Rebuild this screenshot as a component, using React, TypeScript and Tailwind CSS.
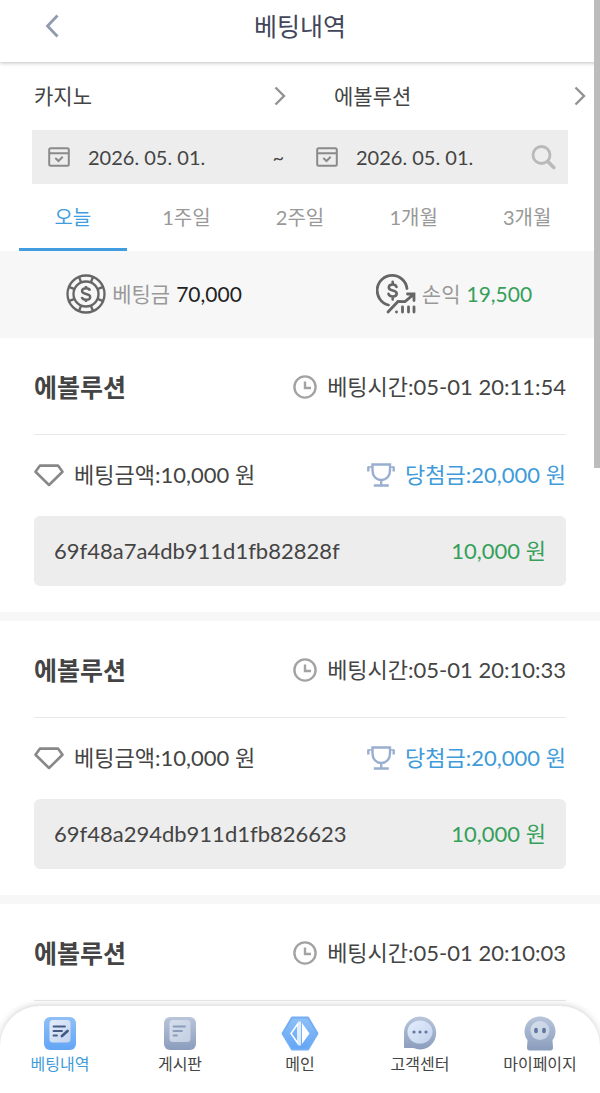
import { useState, type ReactNode } from "react";

const games = ["카지노", "슬롯"];
const vendors = ["에볼루션", "프라그마틱"];
const periods = ["오늘", "1주일", "2주일", "1개월", "3개월"];

type Bet = {
  vendor: string;
  time: string;
  detail?: { stake: string; win: string; id: string; profit: string };
};

const bets: Bet[] = [
  {
    vendor: "에볼루션",
    time: "05-01 20:11:54",
    detail: {
      stake: "10,000",
      win: "20,000",
      id: "69f48a7a4db911d1fb82828f",
      profit: "10,000",
    },
  },
  {
    vendor: "에볼루션",
    time: "05-01 20:10:33",
    detail: {
      stake: "10,000",
      win: "20,000",
      id: "69f48a294db911d1fb826623",
      profit: "10,000",
    },
  },
  { vendor: "에볼루션", time: "05-01 20:10:03" },
];

function ChevronIcon() {
  return (
    <svg
      viewBox="0 0 12 20"
      className="h-5 w-3 shrink-0 fill-none stroke-[#929292]"
      strokeWidth="2.4"
      aria-hidden="true"
    >
      <path d="M1.5 1.5 10 10l-8.5 8.5" />
    </svg>
  );
}

function CalendarIcon() {
  return (
    <svg
      viewBox="0 0 22 20"
      className="h-5 w-[22px] shrink-0 fill-none stroke-[#8a8a8a]"
      strokeWidth="2"
      aria-hidden="true"
    >
      <rect x="1.2" y="1.2" width="19.6" height="17.6" rx="1.5" />
      <path d="M1 6.3h20M7.3 11l3.2 3 4.2-4.2" />
    </svg>
  );
}

function SearchIcon() {
  return (
    <svg
      viewBox="0 0 26 26"
      className="size-[26px] fill-none stroke-[#b9b9b9]"
      aria-hidden="true"
    >
      <circle cx="11.5" cy="11" r="8.5" strokeWidth="2.8" />
      <path d="m17.8 17.5 6 6" strokeWidth="3.6" strokeLinecap="round" />
    </svg>
  );
}

const chipAngles = [22.5, 67.5, 112.5, 157.5, 202.5, 247.5, 292.5, 337.5];

function ChipIcon() {
  return (
    <svg
      viewBox="0 0 40 40"
      className="size-10 shrink-0 fill-none stroke-[#666]"
      strokeWidth="2.3"
      aria-hidden="true"
    >
      <circle cx="20" cy="20" r="18.5" />
      <circle cx="20" cy="20" r="12.5" />
      {chipAngles.map((angle) => (
        <path
          key={angle}
          d="M20 1.5v6"
          strokeWidth="2.4"
          transform={`rotate(${angle} 20 20)`}
        />
      ))}
      <path
        d="M24 16.6c-.4-1.5-1.9-2.4-4-2.4-2.4 0-4 1.1-4 2.9 0 4.2 8.2 1.7 8.2 5.8 0 1.8-1.7 2.9-4.2 2.9-2.3 0-3.9-1-4.3-2.7M20 12v2.2M20 25.8V28"
        strokeWidth="2.4"
      />
    </svg>
  );
}

function ProfitIcon() {
  return (
    <svg
      viewBox="0 0 40 40"
      className="size-10 shrink-0 fill-none stroke-[#666]"
      strokeWidth="2.8"
      strokeLinecap="round"
      aria-hidden="true"
    >
      <path d="M12.5 31A15 15 0 1 1 31 14.5" />
      <path
        d="M20.5 13c-.4-1.6-1.9-2.5-3.8-2.5-2.3 0-3.9 1.2-3.9 3 0 4.2 7.9 2 7.9 6.1 0 1.9-1.7 3-4 3-2.2 0-3.8-1-4.2-2.8M16.7 7.7v2.8M16.7 22.6v2.8"
        strokeWidth="2.6"
      />
      <path d="M12 38l10-10.5 7 .2 9-7.5M31.5 20H38v6.5" />
      <path d="M20.5 37.8v.2M26.5 33v5M32.500 33v5M38 33v5" />
    </svg>
  );
}

function ClockIcon() {
  return (
    <svg
      viewBox="0 0 24 24"
      className="size-6 shrink-0 fill-none stroke-[#a3a3a3]"
      strokeWidth="2.4"
      aria-hidden="true"
    >
      <circle cx="12" cy="12" r="10.6" />
      <path d="M12 6.5V13h6" />
    </svg>
  );
}

function DiamondIcon() {
  return (
    <svg
      viewBox="0 0 30 23"
      className="h-[23px] w-[30px] shrink-0 fill-none stroke-[#888]"
      strokeWidth="2.6"
      aria-hidden="true"
    >
      <path d="M6 1.6h18l4.5 6.2L15 21 1.5 7.8z" strokeLinejoin="round" />
    </svg>
  );
}

function TrophyIcon() {
  return (
    <svg
      viewBox="0 0 28 24"
      className="h-6 w-7 shrink-0 fill-none stroke-[#9aafd0]"
      strokeWidth="2.4"
      aria-hidden="true"
    >
      <path d="M5.5 1.5h17.5v6c0 5.500-3.500 9.500-8.750 9.500S5.500 13 5.500 7.500zM14.200 17v5M6.800 22.500h15M1.300 3.500v5M26.700 3.500v5" />
      <path d="M5 4H1M23 4h4" strokeWidth="1.6" />
    </svg>
  );
}

function Gradients() {
  return (
    <svg className="absolute size-0" aria-hidden="true">
      <defs>
        <linearGradient id="navBlue" x1="0" y1="0" x2="0" y2="1">
          <stop offset="0" stopColor="#8fc0f7" />
          <stop offset="1" stopColor="#62a5f5" />
        </linearGradient>
        <linearGradient id="navGray" x1="0" y1="0" x2="0" y2="1">
          <stop offset="0" stopColor="#b8c5da" />
          <stop offset="1" stopColor="#8b9dbd" />
        </linearGradient>
        <linearGradient id="navFace" x1="0" y1="0" x2="1" y2="1">
          <stop offset="0" stopColor="#e3edfb" />
          <stop offset="1" stopColor="#c3d3ee" />
        </linearGradient>
        <linearGradient id="navFaceGray" x1="0" y1="0" x2="1" y2="1">
          <stop offset="0" stopColor="#d5deeb" />
          <stop offset="1" stopColor="#c3cfe2" />
        </linearGradient>
      </defs>
    </svg>
  );
}

const navItems: { label: string; active?: boolean; icon: ReactNode }[] = [
  {
    label: "베팅내역",
    active: true,
    icon: (
      <>
        <rect x="3" y="1" width="32" height="33" rx="6" fill="url(#navBlue)" />
        <rect x="8.5" y="4" width="21" height="22.5" rx="3.5" fill="url(#navFace)" />
        <path
          d="M12.5 10.5h11.5M12.5 15h8.5M12.5 19.5h3.5"
          stroke="#465a86"
          strokeWidth="1.8"
          strokeLinecap="round"
        />
        <path d="m21 20 5.5-5" stroke="#465a86" strokeWidth="2.8" strokeLinecap="round" />
      </>
    ),
  },
  {
    label: "게시판",
    icon: (
      <>
        <rect x="3" y="1" width="32" height="33" rx="6" fill="url(#navGray)" />
        <rect x="8.5" y="4" width="21" height="22" rx="3.5" fill="url(#navFaceGray)" />
        <path
          d="M12.5 10.5h11.5M12.5 15h8.5M12.5 19.5h3.5"
          stroke="#8b9cbc"
          strokeWidth="1.8"
          strokeLinecap="round"
        />
      </>
    ),
  },
  {
    label: "메인",
    icon: (
      <>
        <path
          d="M11 1.5h16l9.5 16-9.5 16H11l-9.5-16z"
          fill="url(#navBlue)"
          stroke="#74aef5"
          strokeWidth="2"
          strokeLinejoin="round"
        />
        <path d="M17 7.5 10 17.500l7 10z" fill="none" stroke="#fff" strokeWidth="1.5" />
        <path d="M19 5.5v24" stroke="#fff" strokeWidth="1.5" />
        <path d="m21 7 7.5 10.5L21 28z" fill="#fff" />
      </>
    ),
  },
  {
    label: "고객센터",
    icon: (
      <>
        <path
          d="M19 .5a16 16.5 0 1 1-6.5 31.5H4c-.7 0-1-.4-1-1V17A16 16.5 0 0 1 19 .5z"
          fill="url(#navGray)"
        />
        <ellipse cx="19" cy="16" rx="12.5" ry="11.5" fill="url(#navFace)" />
        <path
          d="M13 16h.01M19 16h.01M25 16h.01"
          stroke="#6479a2"
          strokeWidth="3.2"
          strokeLinecap="round"
        />
      </>
    ),
  },
  {
    label: "마이페이지",
    icon: (
      <>
        <path
          d="M19 .5C28 .5 34.5 7 34.5 15.5c0 4-1.300 6.500-3 8.500l.5 7.500c.1 2-1 3-2.500 3h-21c-1.500 0-2.600-1-2.500-3L6.500 24c-1.700-2-3-4.500-3-8.500C3.500 7 10 .5 19 .5z"
          fill="url(#navGray)"
        />
        <circle cx="19" cy="14.5" r="9.5" fill="url(#navFaceGray)" />
        <path
          d="M15 13.5v2M23 13.5v2"
          stroke="#5f749e"
          strokeWidth="3.6"
          strokeLinecap="round"
        />
      </>
    ),
  },
];

function FilterSelect({ label, options }: { label: string; options: string[] }) {
  return (
    <label className="flex items-center pr-[14px] pl-[34px]">
      <select
        aria-label={label}
        className="h-9 min-w-0 flex-1 appearance-none bg-transparent text-[21px] leading-9 outline-none"
      >
        {options.map((option) => (
          <option key={option}>{option}</option>
        ))}
      </select>
      <ChevronIcon />
    </label>
  );
}

function DateField({ label, children }: { label: string; children: ReactNode }) {
  return (
    <div className="flex items-center pr-3 pl-4">
      <label className="flex min-w-0 flex-1 items-center gap-[18px]">
        <CalendarIcon />
        <input
          type="text"
          aria-label={label}
          defaultValue="2026. 05. 01."
          className="w-full min-w-0 bg-transparent text-xl leading-7 outline-none"
        />
      </label>
      {children}
    </div>
  );
}

function BetCard({ bet }: { bet: Bet }) {
  return (
    <article className="border-b-[9px] border-[#f7f7f7] px-[34px] last:border-b-0">
      <div className="flex items-center justify-between border-b border-[#e8e8e8] pt-[34px] pb-8 leading-[30px]">
        <h2 className="text-[25px] font-bold">{bet.vendor}</h2>
        <p className="flex items-center gap-2.5 text-[22px]">
          <ClockIcon />
          베팅시간:{bet.time}
        </p>
      </div>
      {bet.detail && (
        <div className="pb-[26px]">
          <div className="flex items-center justify-between pt-[25px] pb-[26px] text-[22px] leading-[30px]">
            <p className="flex items-center gap-2.5">
              <DiamondIcon />
              베팅금액:{bet.detail.stake} 원
            </p>
            <p className="flex items-center gap-2.5 text-[#3f9bd9]">
              <TrophyIcon />
              당첨금:{bet.detail.win} 원
            </p>
          </div>
          <div className="flex items-center justify-between rounded-md bg-[#ededed] px-5 py-5 text-[22px] leading-[30px]">
            <span className="[font-variant-ligatures:none]">{bet.detail.id}</span>
            <span className="text-[#35a05a]">{bet.detail.profit} 원</span>
          </div>
        </div>
      )}
    </article>
  );
}

export default function App() {
  const [period, setPeriod] = useState("오늘");

  return (
    <div className="relative flex h-screen flex-col overflow-hidden bg-white font-[Lato,'Noto_Sans_CJK_KR',sans-serif] text-[#444]">
      <Gradients />
      <header className="relative z-10 grid grid-cols-[1fr_auto_1fr] items-center bg-white pt-2 pb-[18px] shadow-[0_1px_4px_rgba(0,0,0,0.25)]">
        <button type="button" aria-label="뒤로" className="w-fit pl-[45px]">
          <svg
            viewBox="0 0 14 24"
            className="h-6 w-[14px] fill-none stroke-[#929bad]"
            strokeWidth="2.8"
            aria-hidden="true"
          >
            <path d="M12.5 1.5 2.500 12l10 10.500" />
          </svg>
        </button>
        <h1 className="text-[25px] leading-9 text-[#42465a]">베팅내역</h1>
      </header>

      <main className="min-h-0 flex-1 overflow-hidden">
        <div className="grid grid-cols-2 py-4">
          <FilterSelect label="게임" options={games} />
          <FilterSelect label="게임사" options={vendors} />
        </div>

        <div className="mx-8 grid grid-cols-2 bg-[#ededed] py-[13px]">
          <DateField label="시작일">
            <span className="pr-1 text-xl leading-7">~</span>
          </DateField>
          <DateField label="종료일">
            <button type="button" aria-label="검색">
              <SearchIcon />
            </button>
          </DateField>
        </div>

        <div role="tablist" className="grid grid-cols-5 gap-1.5 px-[19px]">
          {periods.map((item) => (
            <button
              key={item}
              type="button"
              role="tab"
              aria-selected={item === period}
              onClick={() => setPeriod(item)}
              className={`border-b-[3px] pt-[18px] pb-4 text-xl leading-[30px] ${
                item === period
                  ? "border-[#429de0] text-[#429de0]"
                  : "border-transparent text-[#999]"
              }`}
            >
              {item}
            </button>
          ))}
        </div>

        <div className="grid grid-cols-2 bg-[#f7f7f7] pt-[23px] pb-6 text-[21px] leading-[30px]">
          <div className="flex items-center justify-center gap-1.5 pl-2">
            <ChipIcon />
            <span className="text-[#999]">베팅금</span>
            <strong className="font-normal text-[#222]">70,000</strong>
          </div>
          <div className="flex items-center justify-center gap-1.5 pl-2">
            <ProfitIcon />
            <span className="text-[#999]">손익</span>
            <strong className="font-normal text-[#35a05a]">19,500</strong>
          </div>
        </div>

        {bets.map((bet) => (
          <BetCard key={bet.time} bet={bet} />
        ))}
      </main>

      <div className="absolute top-0 right-0 z-20 h-[468px] w-1.5 bg-[#bcbcbc]" />

      <nav className="absolute inset-x-0 bottom-0 z-10 grid grid-cols-5 rounded-t-[40px] bg-white pt-2.5 pb-[19px] shadow-[0_-1px_7px_rgba(0,0,0,0.18)]">
        {navItems.map((item) => (
          <a
            key={item.label}
            href="#"
            className={`flex flex-col items-center gap-0.5 text-base leading-5 ${
              item.active ? "text-[#3f9bd9]" : ""
            }`}
          >
            <svg viewBox="0 0 38 36" className="h-9 w-[38px]" aria-hidden="true">
              {item.icon}
            </svg>
            {item.label}
          </a>
        ))}
      </nav>
    </div>
  );
}
